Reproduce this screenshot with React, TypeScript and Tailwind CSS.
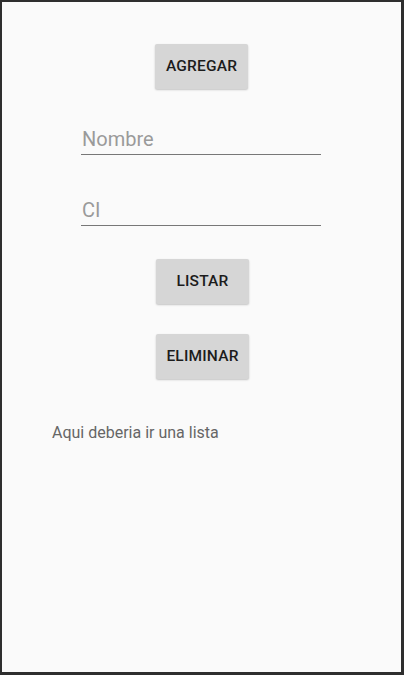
export default function App() {
  const btn =
    "bg-[#d6d6d6] text-[#1c1c1c] text-[15.5px] font-medium tracking-[0.2px] h-[45px] w-[93px] flex items-center justify-center shadow-[0_1px_2px_rgba(0,0,0,0.22)] rounded-[2px]";
  return (
    <div
      className="w-[404px] h-[675px] bg-[#2e2e2e] pt-[2px] pl-[2px] pr-[3px] pb-[3px]"
      style={{ fontFamily: "Roboto, 'Noto Sans', sans-serif" }}
    >
      <div className="w-full h-full bg-[#fafafa] flex flex-col">
        <div className="flex justify-center pt-[42px]">
          <div className={btn}>AGREGAR</div>
        </div>
        <div className="mt-[38px] ml-[79px] w-[240px]">
          <div className="text-[20px] text-[#9a9a9a] leading-[24px] pl-[1px]">Nombre</div>
          <div className="mt-[3px] h-px bg-[#777777]" />
        </div>
        <div className="mt-[43px] ml-[79px] w-[240px]">
          <div className="text-[20px] text-[#9a9a9a] leading-[24px] pl-[1px]">CI</div>
          <div className="mt-[3px] h-px bg-[#777777]" />
        </div>
        <div className="flex justify-center mt-[33px]">
          <div className={btn + " ml-[2px] h-[44px]"}>LISTAR</div>
        </div>
        <div className="flex justify-center mt-[30px]">
          <div className={btn + " ml-[2px] h-[44px]"}>ELIMINAR</div>
        </div>
        <div className="mt-[44px] ml-[50px] text-[16px] text-[#666666] leading-[20px]">
          Aqui deberia ir una lista
        </div>
      </div>
    </div>
  );
}
